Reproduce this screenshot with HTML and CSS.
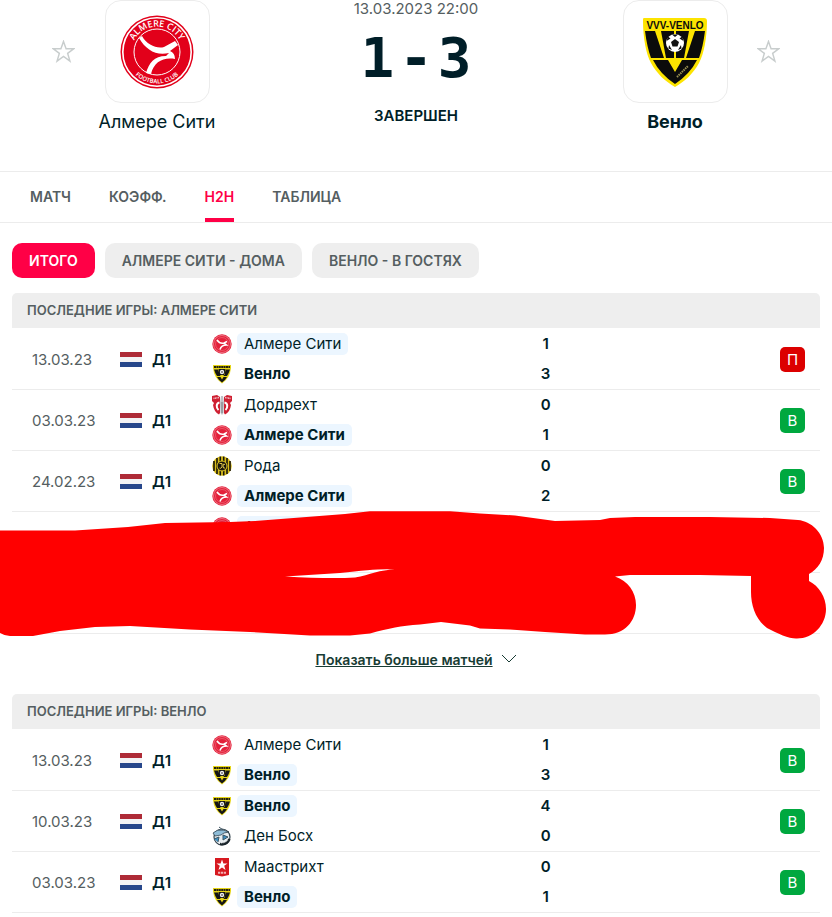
FILE: index.html
```html
<!DOCTYPE html>
<html lang="ru">
<head>
    <meta charset="UTF-8">
    <meta name="viewport" content="width=device-width, initial-scale=1.0">
    <title>Алмере Сити - Венло</title>
    <link rel="stylesheet" href="styles.css">
</head>
<body>
    <!-- Shared icons -->
    <svg class="sprite" aria-hidden="true">
        <symbol id="star" viewBox="0 0 24 24">
            <path d="M12 1.5 14.7 9.2H22.6L16.3 13.9 18.7 22 12 17.2 5.3 22 7.7 13.9 1.4 9.2H9.3Z" fill="none" stroke="#c8cdcd" stroke-width="1.5"/>
        </symbol>
        <symbol id="almere-small" viewBox="0 0 20 20">
            <circle cx="10" cy="10" r="9.700" fill="#e3203a"/>
            <circle cx="10" cy="10" r="8.500" fill="none" stroke="#f7a9b2" stroke-width=".6"/>
            <circle cx="10" cy="10" r="6.500" fill="none" stroke="#f07482" stroke-width=".6"/>
            <path d="M5 6C7 9 10 9.500 12 9L15 7.500M12 9 14.500 11C11 11 9 12 8 15.500" fill="none" stroke="#fff" stroke-width="1.500"/>
        </symbol>
        <symbol id="venlo-small" viewBox="0 0 20 20">
            <path d="M1 1H19V4Q18 14 10 19.500 2 14 1 4Z" fill="#e6d516"/>
            <path d="M1.500 3H18.500M2 5.500H6L8.500 12H5Q3 9 2 5.500ZM18 5.500H14L11.500 12H15Q17 9 18 5.500ZM6.500 5H13.500L12.500 11H7.500ZM5 13H8.500L10 15.500 11.500 13H15Q13.500 16 10 18.500 6.500 16 5 13Z" fill="#151515"/>
            <path d="M2 3H18" stroke="#242010" stroke-width="2" stroke-dasharray="2 .4"/>
            <circle cx="10" cy="8" r="2.200" fill="#eee"/>
            <circle cx="10" cy="8" r=".8" fill="#222"/>
        </symbol>
        <symbol id="dordrecht" viewBox="0 0 20 20">
            <path d="M0 1 5 0 8 2V18L7 19.500Q2 17 1 10L2 8 0 6ZM20 1 15 0 12 2V18L13 19.500Q18 17 19 10L18 8 20 6Z" fill="#cf2032"/>
            <path d="M1.500 3.500 7 2.500M18.500 3.500 13 2.500" stroke="#f4c4ca" stroke-width="1.500" stroke-dasharray="1 .5"/>
            <path d="M7.500 7.500C4 8 4 13 6.500 15M12.500 7.500C16 8 16 13 13.500 15" fill="none" stroke="#fff" stroke-width="2"/>
            <path d="M9 1H11L12 8 11.500 18 10 20 8.500 18 8 8Z" fill="#bfc1c6"/>
            <path d="M10 7V18" stroke="#777a80" stroke-width="1"/>
        </symbol>
        <symbol id="roda" viewBox="0 0 20 20">
            <circle cx="10" cy="10" r="9.800" fill="#d9bd19"/>
            <path d="M2 5V15M5 2V18M8.300 .5V19.500M11.700 .5V19.500M15 2V18M18 5V15" stroke="#17150b" stroke-width="1.600"/>
            <circle cx="10" cy="10" r="5" fill="#17150b" stroke="#e4ca27" stroke-width="1"/>
            <path d="M7.500 7.500H10V11Q9 13 7.500 12M13 8.500Q11 7 11 10T13 12" fill="none" stroke="#ddc44b" stroke-width="1"/>
        </symbol>
        <symbol id="denbosch" viewBox="0 0 20 20">
            <circle cx="10" cy="11" r="8" fill="#e8eef1" stroke="#35444e" stroke-width="1.200"/>
            <path d="M1 7Q5 3 11 4L17 6 12 7 9 9 3 10Z" fill="#8fbdd8" stroke="#25353f" stroke-width=".7"/>
            <path d="M7 1 11 4M2 13 7 11 6 16M11 9 16 11 11 14Z" fill="#3e91c4" stroke="#3e5664" stroke-width="1"/>
            <path d="M8 18Q15 19 17.500 13" fill="none" stroke="#1a252b" stroke-width="2.500"/>
            <path d="M9 17Q14 17 16 14" fill="none" stroke="#fff" stroke-width=".7" stroke-dasharray="1 .6"/>
        </symbol>
        <symbol id="maastricht" viewBox="0 0 20 20">
            <path d="M3 1H17V18L10 19.500 3 18Z" fill="#d71920"/>
            <path d="M10 2.500 11.400 6.500H15.500L12.200 8.800 13.500 13 10 10.500 6.500 13 7.800 8.800 4.500 6.500H8.600Z" fill="#fff"/>
            <path d="M6 15.700H14" stroke="#f3b0b3" stroke-width="2" stroke-dasharray="2.200 .7"/>
        </symbol>
    </svg>

    <header class="match">
        <button class="star" aria-label="Добавить Алмере Сити в избранное"><svg><use href="#star"/></svg></button>
        <div class="club">
            <div class="crest-box">
                <svg class="crest-big" viewBox="0 0 74 74">
                    <circle cx="37" cy="37" r="36.5" fill="#e2001a"/>
                    <circle cx="37" cy="37" r="34.2" fill="none" stroke="#fff" stroke-width="1.6"/>
                    <circle cx="37" cy="37" r="23" fill="none" stroke="#fff" stroke-width="1"/>
                    <path d="M19 23 22 21C27 30 37 34 44 32L55 26 58 30 50 36Q55 38 55 44C43 42 34 47 31 59L26 58C29 48 34 41 46 41L49 38C36 41 26 35 19 23Z" fill="#fff"/>
                    <path id="arc-top" d="M11.5 37A25.500 25.500 0 0 1 62.500 37" fill="none"/>
                    <path id="arc-bottom" d="M5.500 37A31.500 31.500 0 0 0 68.500 37" fill="none"/>
                    <text class="crest-text" font-size="9" text-anchor="middle"><textPath href="#arc-top" startOffset="50%">ALMERE CITY</textPath></text>
                    <text class="crest-text" font-size="6" text-anchor="middle"><textPath href="#arc-bottom" startOffset="50%">FOOTBALL CLUB</textPath></text>
                </svg>
            </div>
            <span class="club-name">Алмере Сити</span>
        </div>
        <div class="result">
            <time>13.03.2023 22:00</time>
            <div class="score"><span>1</span><span>-</span><span>3</span></div>
            <span class="status">ЗАВЕРШЕН</span>
        </div>
        <div class="club">
            <div class="crest-box">
                <svg class="crest-shield" viewBox="0 0 66 70">
                    <path d="M3 1H62Q65 1 65 4C65 20 62 37 57 46 51 57 43 64 33 70 23 64 15 57 9 46 4 37 1 20 1 4 1 1 1 1 3 1Z" fill="#fde400"/>
                    <text x="33" y="12" text-anchor="middle" class="venlo-text" font-size="10">VVV-VENLO</text>
                    <path d="M3 14H13L22 41H9Q5 30 3 14ZM63 14H53L44 41H57Q61 30 63 14ZM11 43H26L33 55 40 43H55Q48 57 33 67 18 57 11 43Z" fill="#0b0b0b"/>
                    <path d="M19 14H47L42 41H24Z" fill="#0b0b0b"/>
                    <path d="M32 14H34V41H32Z" fill="#fde400"/>
                    <circle cx="33" cy="26" r="9" fill="#fff"/>
                    <path d="M33 22 37 25 35.500 29.500H30.500L29 25ZM30 17.500H36L33 20ZM24.500 24 26 19.500 28.500 21.500ZM41.500 24 40 19.500 37.500 21.500ZM26.500 31.500 27 28 30 33ZM39.500 31.500 39 28 36 33Z" fill="#111"/>
                    <path d="M35 60 46 49" stroke="#9b9152" stroke-width="2" stroke-dasharray="1.500 .8"/>
                </svg>
            </div>
            <span class="club-name winner">Венло</span>
        </div>
        <button class="star" aria-label="Добавить Венло в избранное"><svg><use href="#star"/></svg></button>
    </header>

    <nav class="tabs">
        <a href="#match">МАТЧ</a>
        <a href="#odds">КОЭФФ.</a>
        <a href="#h2h" class="selected">H2H</a>
        <a href="#table">ТАБЛИЦА</a>
    </nav>

    <main>
        <div class="filters">
            <button class="selected">ИТОГО</button>
            <button>АЛМЕРЕ СИТИ - ДОМА</button>
            <button>ВЕНЛО - В ГОСТЯХ</button>
        </div>

        <section>
            <h2>ПОСЛЕДНИЕ ИГРЫ: АЛМЕРЕ СИТИ</h2>
            <div class="games-wrap">
                <table class="games">
                    <tr>
                        <td class="date">13.03.23</td>
                        <td class="league"><div><i class="flag"></i>Д1</div></td>
                        <td class="teams">
                            <div><svg><use href="#almere-small"/></svg><span class="own">Алмере Сити</span></div>
                            <div><svg><use href="#venlo-small"/></svg><span class="won">Венло</span></div>
                        </td>
                        <td class="goals"><div>1</div><div>3</div></td>
                        <td class="outcome"><span class="badge lose">П</span></td>
                    </tr>
                    <tr>
                        <td class="date">03.03.23</td>
                        <td class="league"><div><i class="flag"></i>Д1</div></td>
                        <td class="teams">
                            <div><svg><use href="#dordrecht"/></svg><span>Дордрехт</span></div>
                            <div><svg><use href="#almere-small"/></svg><span class="own won">Алмере Сити</span></div>
                        </td>
                        <td class="goals"><div>0</div><div>1</div></td>
                        <td class="outcome"><span class="badge">В</span></td>
                    </tr>
                    <tr>
                        <td class="date">24.02.23</td>
                        <td class="league"><div><i class="flag"></i>Д1</div></td>
                        <td class="teams">
                            <div><svg><use href="#roda"/></svg><span>Рода</span></div>
                            <div><svg><use href="#almere-small"/></svg><span class="own won">Алмере Сити</span></div>
                        </td>
                        <td class="goals"><div>0</div><div>2</div></td>
                        <td class="outcome"><span class="badge">В</span></td>
                    </tr>
                    <tr>
                        <td></td>
                        <td></td>
                        <td class="teams">
                            <div><svg><use href="#almere-small"/></svg><span class="own">Алмере Сити</span></div>
                            <div></div>
                        </td>
                        <td></td>
                        <td></td>
                    </tr>
                    <tr>
                        <td class="teams"><div></div><div></div></td>
                        <td></td>
                        <td></td>
                        <td></td>
                        <td></td>
                    </tr>
                </table>
                <!-- red marker over the last two games -->
                <svg class="marker" viewBox="0 510 832 130" preserveAspectRatio="none" aria-hidden="true">
                    <path fill="#f00" fill-rule="evenodd" d="M0 530.500H75L128 527 165 523 230 522 255 521 345 514 370 511.300H450L480 513.500 515 515.500 555 521 600 520 610 518 635 517H710L770 518 798 520C811 521 824 533 824 548 824 560 818 569 809 574V581C819 586 826 597 826 609 826 625 813 638.500 797 638.500 790 639 778 634 767 628 756 620 751 606 751 592V576L700 575H630L615 576.500C628 581 636 592 636 605 636 621 625 634.500 605 634.500H585L545 632 510 629.500 480 628.500 470 625.500 441 622 420 624.500C400 626 390 628 370 633.500L350 635.500H310L250 632 190 629.500 130 626 95 627 60 631 33 636H10Q5 636 0 633ZM285 576.500Q330 579 355 577.500C370 575 380 569.500 395 569.500Q380 568 340 573Z"/>
                </svg>
            </div>
            <div class="more">
                <a href="#more"><span>Показать больше матчей</span><svg viewBox="0 0 16 10"><path d="M1 1 8 8 15 1" fill="none" stroke="#183c34" stroke-width="1"/></svg></a>
            </div>
        </section>

        <section>
            <h2>ПОСЛЕДНИЕ ИГРЫ: ВЕНЛО</h2>
            <table class="games">
                <tr>
                    <td class="date">13.03.23</td>
                    <td class="league"><div><i class="flag"></i>Д1</div></td>
                    <td class="teams">
                        <div><svg><use href="#almere-small"/></svg><span>Алмере Сити</span></div>
                        <div><svg><use href="#venlo-small"/></svg><span class="own won">Венло</span></div>
                    </td>
                    <td class="goals"><div>1</div><div>3</div></td>
                    <td class="outcome"><span class="badge">В</span></td>
                </tr>
                <tr>
                    <td class="date">10.03.23</td>
                    <td class="league"><div><i class="flag"></i>Д1</div></td>
                    <td class="teams">
                        <div><svg><use href="#venlo-small"/></svg><span class="own won">Венло</span></div>
                        <div><svg><use href="#denbosch"/></svg><span>Ден Босх</span></div>
                    </td>
                    <td class="goals"><div>4</div><div>0</div></td>
                    <td class="outcome"><span class="badge">В</span></td>
                </tr>
                <tr>
                    <td class="date">03.03.23</td>
                    <td class="league"><div><i class="flag"></i>Д1</div></td>
                    <td class="teams">
                        <div><svg><use href="#maastricht"/></svg><span>Маастрихт</span></div>
                        <div><svg><use href="#venlo-small"/></svg><span class="own won">Венло</span></div>
                    </td>
                    <td class="goals"><div>0</div><div>1</div></td>
                    <td class="outcome"><span class="badge">В</span></td>
                </tr>
            </table>
        </section>
    </main>
</body>
</html>
```

FILE: styles.css
```css
* {
    box-sizing: border-box;
}
body {
    margin: 0;
    background-color: #fff;
    color: #001e28;
    font-family: Inter, "Liberation Sans", sans-serif;
    font-size: 15px;
}
button {
    font-family: inherit;
    border: none;
    cursor: pointer;
}
.sprite {
    position: absolute;
    width: 0;
    height: 0;
}
.crest-text {
    fill: #fff;
    font-family: "Open Sans", sans-serif;
    font-weight: 600;
}
.venlo-text {
    fill: #0b0b0b;
    font-family: "Liberation Sans", sans-serif;
    font-weight: bold;
}

/* Match header */
.match {
    display: flex;
    justify-content: space-between;
    align-items: flex-start;
    padding: 0 52px;
    height: 171px;
}
.star {
    padding: 0;
    margin-top: 40px;
    background: none;
}
.star svg {
    display: block;
    width: 23px;
    height: 23px;
}
.club {
    display: flex;
    flex-direction: column;
    align-items: center;
    width: 120px;
}
.match .club:nth-child(2) {
    margin-left: 22px;
    margin-right: auto;
}
.match .club:nth-child(4) {
    margin-left: auto;
    margin-right: 22px;
}
.crest-box {
    display: flex;
    align-items: center;
    justify-content: center;
    width: 105px;
    height: 103px;
    border: 1px solid #ececec;
    border-radius: 16px;
}
.crest-big {
    width: 74px;
    height: 74px;
}
.crest-shield {
    width: 66px;
    height: 70px;
}
.club-name {
    margin-top: 8px;
    font-size: 18px;
    line-height: 22px;
    white-space: nowrap;
}
.winner {
    font-weight: bold;
}
.result {
    display: flex;
    flex-direction: column;
    align-items: center;
}
.result time {
    color: #555e61;
    line-height: 18px;
}
.score {
    display: flex;
    gap: 5px;
    margin-top: 8px;
    font-family: "DejaVu Sans Mono", monospace;
    font-size: 56px;
    font-weight: bold;
    line-height: 64px;
}
.status {
    margin-top: 16px;
    font-weight: 600;
    line-height: 20px;
}

/* Tabs */
.tabs {
    display: flex;
    gap: 38px;
    height: 52px;
    padding: 0 30px;
    border-top: 1px solid #ececec;
    border-bottom: 1px solid #ececec;
}
.tabs a {
    line-height: 50px;
    color: #555e61;
    font-size: 14px;
    font-weight: 600;
    text-decoration: none;
}
.tabs .selected {
    color: #ff0046;
    background: linear-gradient(#ff0046, #ff0046) bottom / 100% 4px no-repeat;
}

main {
    padding: 20px 12px 0;
}
.filters {
    display: flex;
    gap: 10px;
    margin-bottom: 15px;
}
.filters button {
    height: 35px;
    padding: 0 17px;
    border-radius: 10px;
    background-color: #eee;
    color: #555e61;
    font-size: 14px;
    font-weight: 600;
}
.filters .selected {
    background-color: #ff0046;
    color: #fff;
}

/* Games */
h2 {
    margin: 0;
    padding: 0 15px;
    border-radius: 5px 5px 0 0;
    background-color: #eee;
    color: #555e61;
    font-size: 13px;
    font-weight: 600;
    line-height: 35px;
}
.games-wrap {
    position: relative;
}
.games {
    width: 100%;
    padding-top: 1px;
    table-layout: fixed;
    border-spacing: 0;
}
.games td {
    padding: 0;
    border-bottom: 1px solid #ececec;
}
.games td:nth-child(1) {
    width: 108px;
}
.games td:nth-child(2) {
    width: 92px;
}
.games td:nth-child(4) {
    width: 64px;
}
.games td:nth-child(5) {
    width: 30%;
}
.games .date {
    padding-left: 20px;
    color: #555e61;
}
.league div {
    display: flex;
    align-items: center;
    gap: 10px;
    font-weight: 600;
}
.flag {
    width: 22px;
    height: 15px;
    background: linear-gradient(#ae2b37 5px, #f3f3f5 5px 10px, #27478b 10px);
}
.teams div {
    display: flex;
    align-items: center;
    gap: 5px;
    height: 30px;
}
.teams svg {
    width: 20px;
    height: 20px;
}
.teams span {
    padding: 0 7px;
    border-radius: 5px;
    line-height: 22px;
}
.teams .own {
    background-color: #ecf6ff;
}
.teams .won {
    font-weight: bold;
}
.goals {
    text-align: center;
    font-weight: 600;
    line-height: 30px;
}
.badge {
    display: block;
    width: 25px;
    margin: 0 15px 0 auto;
    border-radius: 5px;
    background-color: #00a83f;
    color: #fff;
    line-height: 25px;
    text-align: center;
}
.lose {
    background-color: #dc0000;
}
.marker {
    position: absolute;
    left: -12px;
    bottom: -6px;
    width: calc(100% + 24px);
    height: 130px;
}
.more {
    display: flex;
    align-items: center;
    justify-content: center;
    height: 60px;
    padding-bottom: 10px;
}
.more a {
    display: flex;
    align-items: center;
    gap: 8px;
    color: #183c34;
    font-size: 14px;
    font-weight: 600;
    text-decoration: none;
}
.more span {
    text-decoration: underline;
}
.more svg {
    width: 16px;
    height: 10px;
}
```
